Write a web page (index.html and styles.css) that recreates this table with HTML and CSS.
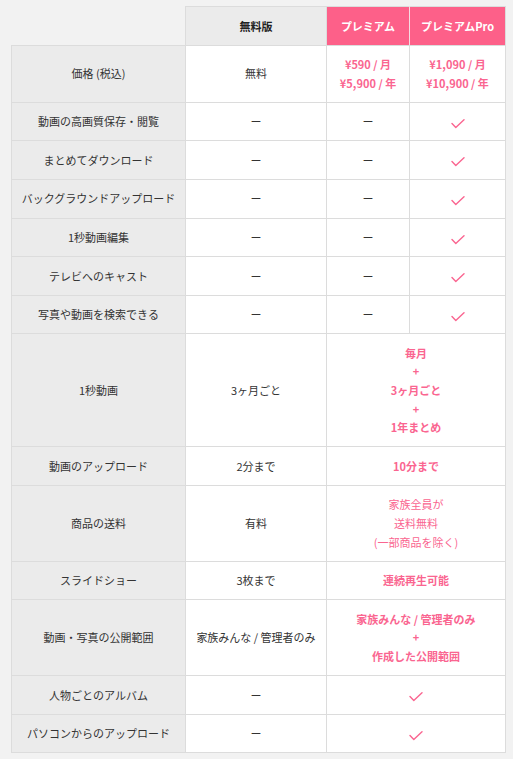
FILE: index.html
```html
<!DOCTYPE html>
<html lang="ja">
<head>
<meta charset="utf-8">
<title>プラン比較</title>
<link rel="stylesheet" href="styles.css">
</head>
<body>
<table class="plans">
  <colgroup>
    <col class="c-label">
    <col class="c-free">
    <col class="c-prem">
    <col class="c-pro">
  </colgroup>
  <thead>
    <tr>
      <th class="blank"></th>
      <th class="h-free">無料版</th>
      <th class="h-pink h-prem">プレミアム</th>
      <th class="h-pink">プレミアムPro</th>
    </tr>
  </thead>
  <tbody>
    <tr>
      <th>価格 (税込)</th>
      <td>無料</td>
      <td class="pink b">¥590 / 月<br>¥5,900 / 年</td>
      <td class="pink b">¥1,090 / 月<br>¥10,900 / 年</td>
    </tr>
    <tr>
      <th>動画の高画質保存・閲覧</th>
      <td>ー</td>
      <td>ー</td>
      <td><svg class="check" viewBox="0 0 14 10" width="14" height="10"><polyline points="1,4.6 4.8,8.6 13,0.8"/></svg></td>
    </tr>
    <tr>
      <th>まとめてダウンロード</th>
      <td>ー</td>
      <td>ー</td>
      <td><svg class="check" viewBox="0 0 14 10" width="14" height="10"><polyline points="1,4.6 4.8,8.6 13,0.8"/></svg></td>
    </tr>
    <tr>
      <th>バックグラウンドアップロード</th>
      <td>ー</td>
      <td>ー</td>
      <td><svg class="check" viewBox="0 0 14 10" width="14" height="10"><polyline points="1,4.6 4.8,8.6 13,0.8"/></svg></td>
    </tr>
    <tr>
      <th>1秒動画編集</th>
      <td>ー</td>
      <td>ー</td>
      <td><svg class="check" viewBox="0 0 14 10" width="14" height="10"><polyline points="1,4.6 4.8,8.6 13,0.8"/></svg></td>
    </tr>
    <tr>
      <th>テレビへのキャスト</th>
      <td>ー</td>
      <td>ー</td>
      <td><svg class="check" viewBox="0 0 14 10" width="14" height="10"><polyline points="1,4.6 4.8,8.6 13,0.8"/></svg></td>
    </tr>
    <tr>
      <th>写真や動画を検索できる</th>
      <td>ー</td>
      <td>ー</td>
      <td><svg class="check" viewBox="0 0 14 10" width="14" height="10"><polyline points="1,4.6 4.8,8.6 13,0.8"/></svg></td>
    </tr>
    <tr>
      <th>1秒動画</th>
      <td>3ヶ月ごと</td>
      <td colspan="2" class="pink b">毎月<br>+<br>3ヶ月ごと<br>+<br>1年まとめ</td>
    </tr>
    <tr>
      <th>動画のアップロード</th>
      <td>2分まで</td>
      <td colspan="2" class="pink b">10分まで</td>
    </tr>
    <tr>
      <th>商品の送料</th>
      <td>有料</td>
      <td colspan="2" class="pink">家族全員が<br>送料無料<br>(一部商品を除く)</td>
    </tr>
    <tr>
      <th>スライドショー</th>
      <td>3枚まで</td>
      <td colspan="2" class="pink b">連続再生可能</td>
    </tr>
    <tr>
      <th>動画・写真の公開範囲</th>
      <td>家族みんな / 管理者のみ</td>
      <td colspan="2" class="pink b">家族みんな / 管理者のみ<br>+<br>作成した公開範囲</td>
    </tr>
    <tr>
      <th>人物ごとのアルバム</th>
      <td>ー</td>
      <td colspan="2"><svg class="check" viewBox="0 0 14 10" width="14" height="10"><polyline points="1,4.6 4.8,8.6 13,0.8"/></svg></td>
    </tr>
    <tr>
      <th>パソコンからのアップロード</th>
      <td>ー</td>
      <td colspan="2"><svg class="check" viewBox="0 0 14 10" width="14" height="10"><polyline points="1,4.6 4.8,8.6 13,0.8"/></svg></td>
    </tr>
  </tbody>
</table>
</body>
</html>
```

FILE: styles.css
```css
html, body {
  margin: 0;
  padding: 0;
  background: #f2f2f2;
}

body {
  padding: 6px 0 0 11px;
  font-family: "Noto Sans CJK JP", "Noto Sans", sans-serif;
  font-size: 11px;
  color: #333;
}

.plans {
  border-collapse: collapse;
  table-layout: fixed;
  width: 494px;
}

.c-label { width: 174px; }
.c-free { width: 141px; }
.c-prem { width: 83px; }
.c-pro { width: 96px; }

.plans th,
.plans td {
  border: 1px solid #dcdcdc;
  padding: 9.5px 2px;
  line-height: 18.6px;
  text-align: center;
  vertical-align: middle;
  font-weight: normal;
}

.plans td {
  background: #fff;
}

.plans tbody th {
  background: #ebebeb;
}

.plans thead th {
  font-weight: bold;
}

.plans th.blank {
  border: none;
  background: transparent;
}

.plans th.h-free {
  background: #ebebeb;
  color: #222;
}

.plans th.h-pink {
  background: #fd6089;
  color: #fff;
}

.plans th.h-prem {
  border-right-color: #f6dbe2;
}

.plans .pink {
  color: #fa6590;
}

.plans .b {
  font-weight: bold;
}

.check {
  display: inline-block;
  vertical-align: middle;
  margin-top: 1px;
}

.check polyline {
  fill: none;
  stroke: #fa6590;
  stroke-width: 1.4;
  stroke-linecap: round;
  stroke-linejoin: round;
}
```
